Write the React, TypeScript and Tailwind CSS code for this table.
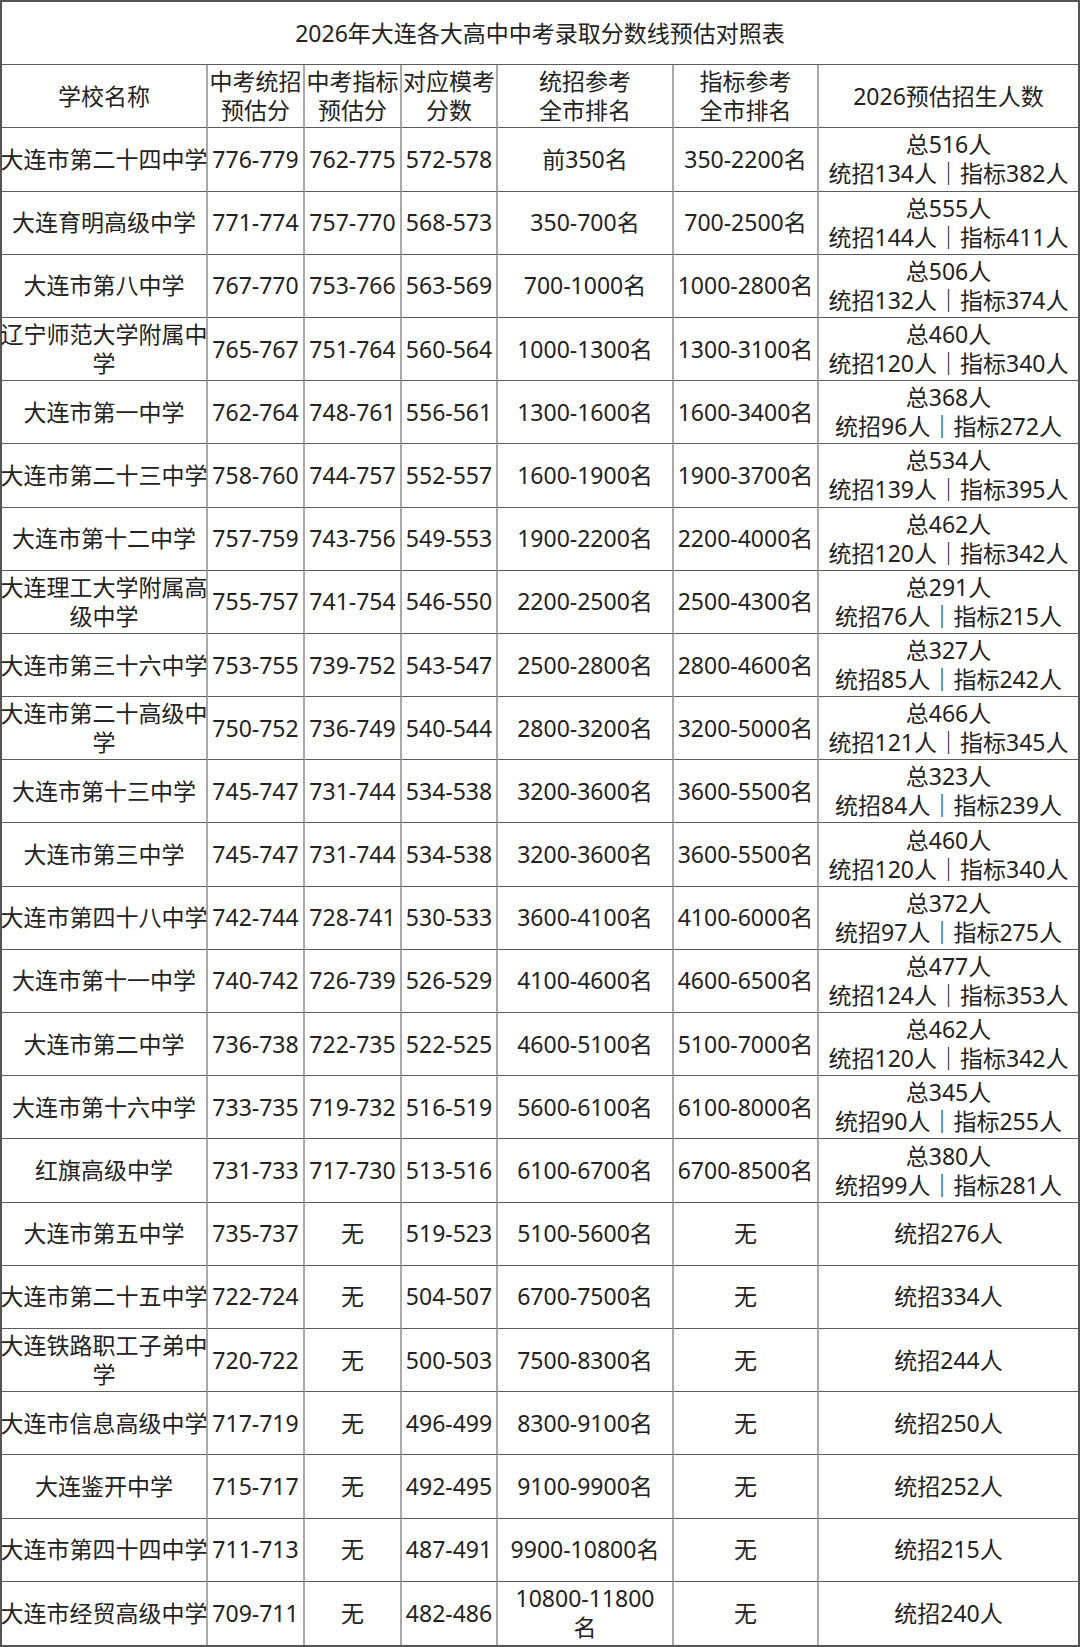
const header: string[][] = [
  ['学校名称'],
  ['中考统招', '预估分'],
  ['中考指标', '预估分'],
  ['对应模考', '分数'],
  ['统招参考', '全市排名'],
  ['指标参考', '全市排名'],
  ['2026预估招生人数'],
]

// each cell is a list of lines; "/" marks a line break
const rows: string[][] = [
  ['大连市第二十四中学', '776-779', '762-775', '572-578', '前350名', '350-2200名', '总516人/统招134人｜指标382人'],
  ['大连育明高级中学', '771-774', '757-770', '568-573', '350-700名', '700-2500名', '总555人/统招144人｜指标411人'],
  ['大连市第八中学', '767-770', '753-766', '563-569', '700-1000名', '1000-2800名', '总506人/统招132人｜指标374人'],
  ['辽宁师范大学附属中/学', '765-767', '751-764', '560-564', '1000-1300名', '1300-3100名', '总460人/统招120人｜指标340人'],
  ['大连市第一中学', '762-764', '748-761', '556-561', '1300-1600名', '1600-3400名', '总368人/统招96人｜指标272人'],
  ['大连市第二十三中学', '758-760', '744-757', '552-557', '1600-1900名', '1900-3700名', '总534人/统招139人｜指标395人'],
  ['大连市第十二中学', '757-759', '743-756', '549-553', '1900-2200名', '2200-4000名', '总462人/统招120人｜指标342人'],
  ['大连理工大学附属高/级中学', '755-757', '741-754', '546-550', '2200-2500名', '2500-4300名', '总291人/统招76人｜指标215人'],
  ['大连市第三十六中学', '753-755', '739-752', '543-547', '2500-2800名', '2800-4600名', '总327人/统招85人｜指标242人'],
  ['大连市第二十高级中/学', '750-752', '736-749', '540-544', '2800-3200名', '3200-5000名', '总466人/统招121人｜指标345人'],
  ['大连市第十三中学', '745-747', '731-744', '534-538', '3200-3600名', '3600-5500名', '总323人/统招84人｜指标239人'],
  ['大连市第三中学', '745-747', '731-744', '534-538', '3200-3600名', '3600-5500名', '总460人/统招120人｜指标340人'],
  ['大连市第四十八中学', '742-744', '728-741', '530-533', '3600-4100名', '4100-6000名', '总372人/统招97人｜指标275人'],
  ['大连市第十一中学', '740-742', '726-739', '526-529', '4100-4600名', '4600-6500名', '总477人/统招124人｜指标353人'],
  ['大连市第二中学', '736-738', '722-735', '522-525', '4600-5100名', '5100-7000名', '总462人/统招120人｜指标342人'],
  ['大连市第十六中学', '733-735', '719-732', '516-519', '5600-6100名', '6100-8000名', '总345人/统招90人｜指标255人'],
  ['红旗高级中学', '731-733', '717-730', '513-516', '6100-6700名', '6700-8500名', '总380人/统招99人｜指标281人'],
  ['大连市第五中学', '735-737', '无', '519-523', '5100-5600名', '无', '统招276人'],
  ['大连市第二十五中学', '722-724', '无', '504-507', '6700-7500名', '无', '统招334人'],
  ['大连铁路职工子弟中/学', '720-722', '无', '500-503', '7500-8300名', '无', '统招244人'],
  ['大连市信息高级中学', '717-719', '无', '496-499', '8300-9100名', '无', '统招250人'],
  ['大连鉴开中学', '715-717', '无', '492-495', '9100-9900名', '无', '统招252人'],
  ['大连市第四十四中学', '711-713', '无', '487-491', '9900-10800名', '无', '统招215人'],
  ['大连市经贸高级中学', '709-711', '无', '482-486', '10800-11800/名', '无', '统招240人'],
]

function Cell({ lines, last, bottom }: { lines: string[]; last: boolean; bottom: boolean }) {
  return (
    <div
      className={`flex flex-col items-center justify-center text-center leading-[29px] whitespace-nowrap ${
        last ? '' : 'border-r-2 border-r-[#a9a9a9]'
      } ${bottom ? '' : 'border-b border-b-[#5c5c5c]'}`}
    >
      {lines.map((l, i) => (
        <div key={i}>{l}</div>
      ))}
    </div>
  )
}

export default function App() {
  return (
    <div
      className="w-[1080px] h-[1647px] bg-white text-[#222] text-[23px] border-2 border-[#555] grid grid-cols-[206px_97px_97px_96px_176px_145px_1fr] grid-rows-[repeat(26,1fr)]"
      style={{ fontFamily: '"Noto Sans", "Noto Sans CJK SC", sans-serif' }}
    >
      {/* Title */}
      <div className="col-span-7 flex items-center justify-center border-b border-b-[#5c5c5c]">
        2026年大连各大高中中考录取分数线预估对照表
      </div>

      {/* Header */}
      {header.map((h, i) => (
        <Cell key={'h' + i} lines={h} last={i === 6} bottom={false} />
      ))}

      {/* Data */}
      {rows.map((r, ri) =>
        r.map((c, ci) => (
          <Cell
            key={ri + '-' + ci}
            lines={c.split('/')}
            last={ci === 6}
            bottom={ri === rows.length - 1}
          />
        ))
      )}
    </div>
  )
}
